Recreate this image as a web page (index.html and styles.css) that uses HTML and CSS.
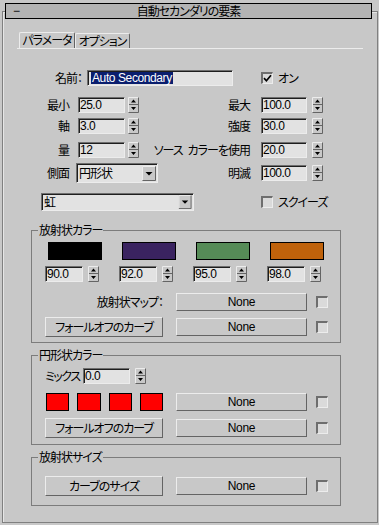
FILE: index.html
```html
<!DOCTYPE html>
<html lang="ja">
<head>
    <meta charset="UTF-8">
    <title>自動セカンダリの要素</title>
    <link rel="stylesheet" href="styles.css">
</head>
<body>
    <!-- shared spinner and arrow glyphs -->
    <svg class="defs" width="0" height="0">
        <symbol id="spin" viewBox="0 0 11 16">
            <rect width="11" height="16" fill="#c8c8c8"/>
            <path d="M0.5 15.5V0.5H10.5" stroke="#ececec" fill="none"/>
            <path d="M0.5 15.5H10.5V0.5" stroke="#646464" fill="none"/>
            <path d="M1 7.5H10" stroke="#646464"/>
            <path d="M5.5 2.5L8 5.5H3Z M3 10H8L5.5 13Z" fill="#000"/>
        </symbol>
        <symbol id="arrow" viewBox="0 0 14 15">
            <rect width="14" height="15" fill="#c8c8c8"/>
            <path d="M0.5 14.5V0.5H13.5" stroke="#ececec" fill="none"/>
            <path d="M0.5 14.5H13.5V0.5" stroke="#646464" fill="none"/>
            <path d="M3.5 6H10.5L7 9.5Z" fill="#000"/>
        </symbol>
    </svg>

    <div class="rollout">
        <div class="title">
            <span class="minus">−</span>
            <span class="title-text">自動セカンダリの要素</span>
            <span></span>
        </div>

        <div class="tabs">
            <div class="tab active">パラメータ</div>
            <div class="tab second">オプション</div>
        </div>

        <!-- Name -->
        <div class="row name-row">
            <span class="name-lbl">名前：</span>
            <span class="field name-field"><span class="sel">Auto Secondary</span></span>
            <span class="check checked name-check">
                <svg width="9" height="9" viewBox="0 0 9 9"><path d="M1 4.2L3.4 6.8L8 1.2" stroke="#000" stroke-width="1.7" fill="none"/></svg>
            </span>
            <span class="check-lbl">オン</span>
        </div>

        <!-- Spinner pairs -->
        <div class="row pair first-pair">
            <span class="lbl-l">最小</span>
            <span class="field num">25.0</span>
            <svg class="spin"><use href="#spin"/></svg>
            <span class="lbl-r">最大</span>
            <span class="field num num-r">100.0</span>
            <svg class="spin spin-r"><use href="#spin"/></svg>
        </div>
        <div class="row pair axis-row">
            <span class="lbl-l">軸</span>
            <span class="field num">3.0</span>
            <svg class="spin"><use href="#spin"/></svg>
            <span class="lbl-r">強度</span>
            <span class="field num num-r">30.0</span>
            <svg class="spin spin-r"><use href="#spin"/></svg>
        </div>
        <div class="row pair amount-row">
            <span class="lbl-l">量</span>
            <span class="field num">12</span>
            <svg class="spin"><use href="#spin"/></svg>
            <span class="lbl-r">ソース&ensp;カラーを使用</span>
            <span class="field num num-r">20.0</span>
            <svg class="spin spin-r"><use href="#spin"/></svg>
        </div>
        <div class="row side-row">
            <span class="lbl-l side-lbl">側面</span>
            <div class="combo side-combo">
                <span class="combo-text">円形状</span>
                <svg class="combo-btn"><use href="#arrow"/></svg>
            </div>
            <span class="lbl-r side-r">明滅</span>
            <span class="field num num-r">100.0</span>
            <svg class="spin spin-r"><use href="#spin"/></svg>
        </div>
        <div class="row rainbow-row">
            <div class="combo rainbow-combo">
                <span class="combo-text">虹</span>
                <svg class="combo-btn small"><use href="#arrow"/></svg>
            </div>
            <span class="check squeeze-check"></span>
            <span class="check-lbl">スクイーズ</span>
        </div>

        <!-- Radial colour -->
        <fieldset class="group">
            <legend>放射状カラー</legend>
            <div class="gbody radial-body">
                <div class="swatches">
                    <div class="col">
                        <span class="swatch" style="background:#000000"></span>
                        <div class="spinrow"><span class="field small-num">90.0</span><svg class="spin spin-r"><use href="#spin"/></svg></div>
                    </div>
                    <div class="col">
                        <span class="swatch" style="background:#3a2360"></span>
                        <div class="spinrow"><span class="field small-num">92.0</span><svg class="spin spin-r"><use href="#spin"/></svg></div>
                    </div>
                    <div class="col">
                        <span class="swatch" style="background:#568b57"></span>
                        <div class="spinrow"><span class="field small-num">95.0</span><svg class="spin spin-r"><use href="#spin"/></svg></div>
                    </div>
                    <div class="col">
                        <span class="swatch" style="background:#bf620b"></span>
                        <div class="spinrow"><span class="field small-num">98.0</span><svg class="spin spin-r"><use href="#spin"/></svg></div>
                    </div>
                </div>
                <div class="brow map-row">
                    <span class="left map-lbl">放射状マップ：</span>
                    <span class="btn none">None</span>
                    <span class="check row-check"></span>
                </div>
                <div class="brow tall">
                    <span class="btn left">フォールオフのカーブ</span>
                    <span class="btn none">None</span>
                    <span class="check row-check"></span>
                </div>
            </div>
        </fieldset>

        <!-- Circular colour -->
        <fieldset class="group">
            <legend>円形状カラー</legend>
            <div class="gbody circ-body">
                <div class="mix-row">
                    <span class="mix-lbl">ミックス</span>
                    <span class="field num">0.0</span>
                    <svg class="spin spin-r"><use href="#spin"/></svg>
                </div>
                <div class="brow red-row">
                    <div class="left reds">
                        <span class="red"></span>
                        <span class="red"></span>
                        <span class="red"></span>
                        <span class="red"></span>
                    </div>
                    <span class="btn none">None</span>
                    <span class="check row-check"></span>
                </div>
                <div class="brow tall">
                    <span class="btn left">フォールオフのカーブ</span>
                    <span class="btn none">None</span>
                    <span class="check row-check"></span>
                </div>
            </div>
        </fieldset>

        <!-- Radial size -->
        <fieldset class="group">
            <legend>放射状サイズ</legend>
            <div class="gbody size-body">
                <div class="brow tall size-row">
                    <span class="btn left">カーブのサイズ</span>
                    <span class="btn none">None</span>
                    <span class="check row-check"></span>
                </div>
            </div>
        </fieldset>
    </div>
</body>
</html>
```

FILE: styles.css
```css
/* Global */
body {
    margin: 0;
    background: #c8c8c8;
    font-family: "Noto Sans CJK JP", sans-serif;
    font-size: 12px;
    line-height: 14px;
    letter-spacing: -1px;
    color: #000;
    font-feature-settings: "palt" 1;
}

.defs {
    position: absolute;
}

/* Rollout frame */
.rollout {
    box-sizing: border-box;
    width: 376px;
    height: 512px;
    margin: 11px 0 0 2px;
    border: 1px solid #808080;
    box-shadow: inset 1px 1px 0 #e6e6e6;
}

.title {
    box-sizing: border-box;
    height: 16px;
    margin: -9px 5px 0 2px;
    background: #b4b4b4;
    border: 1px solid #000;
    display: grid;
    grid-template-columns: 1fr auto 1fr;
    align-items: center;
}

.minus {
    font-family: "Liberation Sans", sans-serif;
    padding-left: 7px;
}

/* Tabs */
.tabs {
    display: flex;
    align-items: flex-end;
    height: 16px;
    margin: 13px 14px 0 14px;
    padding-left: 2px;
    border-bottom: 1px solid #ececec;
}

.tab {
    box-sizing: border-box;
    width: 56px;
    height: 15px;
    text-align: center;
    white-space: nowrap;
    border-top: 1px solid #ececec;
    border-left: 1px solid #ececec;
    border-right: 1px solid #646464;
    border-radius: 2px 2px 0 0;
    line-height: 14px;
}

.tab.active {
    height: 16px;
}

.tab.second {
    width: 55px;
}

/* Generic rows */
.row {
    display: flex;
    align-items: center;
    height: 16px;
    white-space: nowrap;
}

.name-row { margin-top: 21px; }
.first-pair { margin-top: 11px; }
.axis-row { margin-top: 5px; }
.amount-row { margin-top: 8px; }

.name-lbl {
    width: 79px;
    margin-right: 5px;
    text-align: right;
}

.lbl-l {
    width: 66px;
    margin-right: 9px;
    text-align: right;
}

.lbl-r {
    width: 111px;
    margin-right: 11px;
    text-align: right;
}

/* Inputs */
.field {
    box-sizing: border-box;
    height: 16px;
    padding-left: 1px;
    background: #e2e2e2;
    border: 1px solid;
    border-color: #6e6e6e #ececec #ececec #6e6e6e;
    box-shadow: inset 1px 1px 0 #1e1e1e;
    font-family: "Liberation Sans", sans-serif;
    font-size: 12px;
    letter-spacing: -0.5px;
    line-height: 14px;
    overflow: hidden;
}

.num { width: 47px; }
.num-r { width: 46px; }
.small-num { width: 38px; }

.name-field {
    width: 146px;
    display: flex;
    align-items: center;
}

.sel {
    margin-left: 2px;
    padding: 0 1px;
    line-height: 12px;
    background: #0a1e6e;
    color: #fff;
    letter-spacing: -0.4px;
}

.spin {
    width: 11px;
    height: 16px;
    margin-left: 3px;
    flex: none;
}

.spin-r { margin-left: 5px; }

/* Checkboxes */
.check {
    box-sizing: border-box;
    width: 12px;
    height: 12px;
    flex: none;
    background: #dadada;
    border-style: solid;
    border-width: 2px 1px 1px 2px;
    border-color: #6e6e6e #ececec #ececec #6e6e6e;
    display: flex;
    align-items: center;
    justify-content: center;
}

.name-check { margin-left: 28px; }

.check-lbl { margin-left: 5px; }

/* Drop-downs */
.combo {
    box-sizing: border-box;
    display: flex;
    align-items: center;
    background: #e2e2e2;
    border: 1px solid;
    border-color: #6e6e6e #ececec #ececec #6e6e6e;
    box-shadow: inset 1px 1px 0 #1e1e1e;
}

.combo-text {
    flex: 1;
    padding-left: 2px;
}

.combo-btn {
    width: 14px;
    height: 15px;
    margin-right: 1px;
}

.combo-btn.small { height: 14px; }

.side-row {
    height: 20px;
    margin-top: 5px;
}

.side-lbl { margin-right: 7px; }

.side-combo {
    width: 82px;
    height: 20px;
}

.side-r { width: 92px; }

.rainbow-row {
    height: 18px;
    margin-top: 10px;
}

.rainbow-combo {
    width: 153px;
    height: 18px;
    margin-left: 38px;
}

.squeeze-check { margin-left: 67px; }

/* Group boxes */
.group {
    box-sizing: border-box;
    width: 310px;
    margin: 5px 0 0 28px;
    padding: 0;
    border: 1px solid #7c7c7c;
    min-width: 0;
}

.group:first-of-type { margin-top: 12px; }

.group legend {
    margin-left: 6px;
    padding: 0 1px;
    line-height: 14px;
}

.gbody {
    padding: 5px 0 5px 13px;
}

.circ-body { padding: 6px 0 6px 13px; }
.size-body { padding: 5px 0 9px 13px; }

.swatches {
    display: grid;
    grid-template-columns: repeat(4, 74px);
}

.col {
    display: flex;
    flex-direction: column;
}

.swatch {
    box-sizing: border-box;
    width: 54px;
    height: 18px;
    margin-left: 3px;
    border: 1px solid #000;
}

.spinrow {
    display: flex;
    margin-top: 6px;
}

/* Button rows */
.brow {
    display: flex;
    align-items: center;
    height: 17px;
    white-space: nowrap;
}

.brow.tall {
    height: 20px;
    margin-top: 7px;
}

.map-row { margin-top: 11px; }

.left {
    box-sizing: border-box;
    width: 118px;
}

.map-lbl { text-align: right; }

.btn {
    box-sizing: border-box;
    height: 20px;
    display: flex;
    align-items: center;
    justify-content: center;
    background: #c8c8c8;
    border: 1px solid;
    border-color: #ececec #646464 #646464 #ececec;
}

.none {
    width: 131px;
    height: 18px;
    margin-left: 13px;
    font-family: "Liberation Sans", sans-serif;
    letter-spacing: -0.3px;
}

.row-check { margin-left: 9px; }

.mix-row {
    display: flex;
    align-items: center;
    height: 16px;
}

.mix-lbl {
    width: 38px;
    white-space: nowrap;
    letter-spacing: -1.5px;
}

.red-row {
    height: 18px;
    margin-top: 9px;
}

.reds {
    display: flex;
    gap: 8px;
    padding-left: 1px;
}

.red {
    box-sizing: border-box;
    width: 24px;
    height: 18px;
    background: #ff0000;
    border: 1px solid #000;
}

.size-row { margin-top: 0; }
```
